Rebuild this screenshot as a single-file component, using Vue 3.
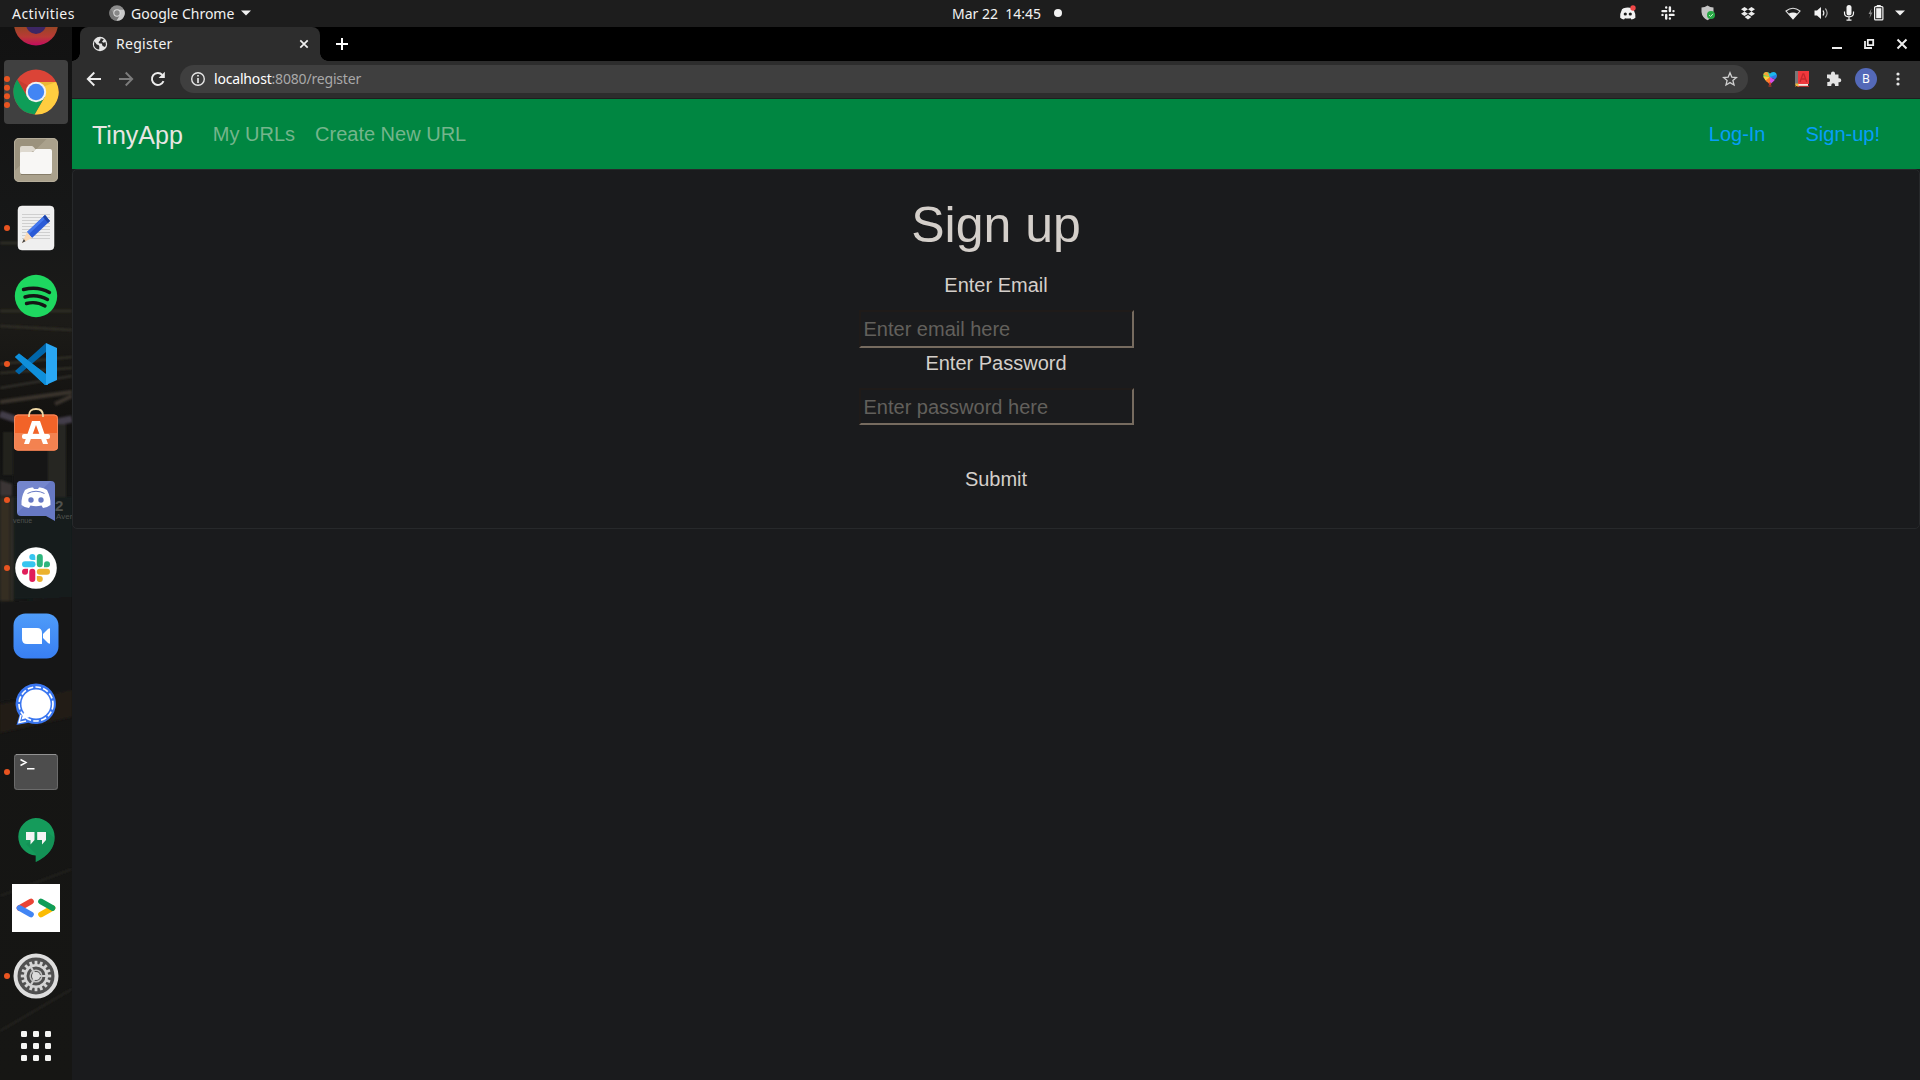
<script setup>
const gearTeeth = Array.from({ length: 16 }, (_, i) => i * 22.5)
const gridDots = [0, 12, 24].flatMap((y) => [0, 12, 24].map((x) => ({ x, y })))
const signalDashes = '5.6 2.3'
</script>

<template>
  <div class="desktop">
    <header class="topbar">
      <div class="topbar-left">
        <span class="activities">Activities</span>
        <svg class="mini-chrome" width="16" height="16" viewBox="0 0 48 48">
          <circle cx="24" cy="24" r="23" fill="#8d8d8d" />
          <path d="M24 14H45A23 23 0 0 1 22 47L33 29Z" fill="#c9c9c9" />
          <path d="M22 47A23 23 0 0 1 5 11L15 29L33 29Z" fill="#777" />
          <circle cx="24" cy="24" r="11" fill="#ddd" />
          <circle cx="24" cy="24" r="8" fill="#888" />
        </svg>
        <span class="app-name">Google Chrome</span>
        <svg width="10" height="6" viewBox="0 0 10 6"><path d="M0 .5H10L5 5.5Z" fill="#f2f2f2" /></svg>
      </div>
      <div class="clock"><span>Mar 22&nbsp; 14:45</span><i class="dot"></i></div>
      <div class="tray">
        <span class="slot wide">
          <svg width="18" height="16" viewBox="0 0 18 16">
            <path d="M4.5 3.2Q9 1.8 13 3.2L14.5 4.4Q17 9 16.4 12.8Q14.5 14.4 12.4 14.6L11.6 13.2Q8.8 14 6 13.2L5 14.6Q3 14.3 1.2 12.8Q.8 8.5 3 4.2Z" fill="#f2f2f2" />
            <circle cx="6.3" cy="9" r="1.6" fill="#1d1d1d" /><circle cx="11.3" cy="9" r="1.6" fill="#1d1d1d" />
            <circle cx="14" cy="3" r="2.7" fill="#f04747" />
          </svg>
        </span>
        <span class="slot wide">
          <svg width="14" height="14" viewBox="0 0 14 14" stroke="#f2f2f2" stroke-width="2.4" stroke-linecap="round">
            <path d="M5.2 1.5V1.6M1.5 5.1H5.2M8.9 1.5V5.1M12.5 5.1V5.1M12.5 8.9H8.9M8.9 12.5V12.4M5.2 12.5V8.9M1.5 8.9V8.9" />
          </svg>
        </span>
        <span class="slot wide">
          <svg width="16" height="16" viewBox="0 0 16 16">
            <path d="M7.5 .5Q10 2.5 13.5 2.5V7Q13 12.5 7.5 15.3Q2 12.5 1.5 7V2.5Q5 2.5 7.5 .5Z" fill="#c4c4c4" />
            <circle cx="11" cy="10" r="4" fill="#27a844" />
            <path d="M9 10L10.6 11.5L13 8.8" fill="none" stroke="#c8efcf" stroke-width="1" />
          </svg>
        </span>
        <span class="slot wide">
          <svg width="14" height="13" viewBox="0 0 14 13" fill="#ececec">
            <path d="M3.5 0L7 2.2L3.5 4.4L0 2.2ZM10.5 0L14 2.2L10.5 4.4L7 2.2ZM3.5 4.5L7 6.7L3.5 8.9L0 6.7ZM10.5 4.5L14 6.7L10.5 8.9L7 6.7ZM7 8L10.4 10.1L7 12.4L3.6 10.1Z" />
          </svg>
        </span>
        <span class="slot wifi">
          <svg width="16" height="13" viewBox="0 0 16 13">
            <path d="M1 4Q8-1.5 15 4L8 12Z" fill="none" stroke="#dedede" stroke-width="1.1" />
            <path d="M3.5 6.8Q8 4 12.5 6.8L8 12.3Z" fill="#f2f2f2" />
          </svg>
        </span>
        <span class="slot">
          <svg width="15" height="14" viewBox="0 0 15 14" fill="none" stroke="#f2f2f2" stroke-width="1.2">
            <path d="M.5 4.5H3L7 1V13L3 9.5H.5Z" fill="#f2f2f2" stroke="none" />
            <path d="M9 4.5Q10.7 7 9 9.5" /><path d="M11.3 2.5Q15 7 11.3 11.5" stroke="#a8a8a8" />
          </svg>
        </span>
        <span class="slot mic">
          <svg width="12" height="16" viewBox="0 0 12 16">
            <rect x="3.5" y="0" width="5" height="10.5" rx="2.5" fill="#f2f2f2" />
            <path d="M1.5 6.5V8Q1.5 11.8 6 11.8T10.5 8V6.5M6 12V15M3.5 15.2H8.5" fill="none" stroke="#f2f2f2" stroke-width="1.2" />
          </svg>
        </span>
        <span class="slot">
          <svg width="16" height="16" viewBox="0 0 16 16">
            <path d="M3.5 3.5L.5 9H2.3L1.5 13L4.5 7.5H2.7Z" fill="#8a8a8a" />
            <path d="M9 1V.5H12.5V1" fill="none" stroke="#f2f2f2" />
            <rect x="6.6" y="1.6" width="8.3" height="13.3" rx="1" fill="none" stroke="#f2f2f2" stroke-width="1.2" />
            <rect x="8.2" y="3.2" width="5.1" height="10" fill="#f2f2f2" />
          </svg>
        </span>
        <span class="slot arrow">
          <svg width="10" height="6" viewBox="0 0 10 6"><path d="M0 .5H10L5 5.5Z" fill="#f2f2f2" /></svg>
        </span>
      </div>
    </header>

    <div class="workspace">
      <aside class="dock">
        <div class="wallpaper" aria-hidden="true">
          <svg width="72" height="1053" viewBox="0 27 72 1053">
            <defs>
              <linearGradient id="wall" x1="0" y1="0" x2="0" y2="1">
                <stop offset="0" stop-color="#121212" /><stop offset=".2" stop-color="#171818" />
                <stop offset=".28" stop-color="#1c1b18" /><stop offset=".38" stop-color="#12110f" />
                <stop offset=".5" stop-color="#181b1c" /><stop offset=".56" stop-color="#151514" />
                <stop offset="1" stop-color="#161614" />
              </linearGradient>
              <filter id="soft"><feGaussianBlur stdDeviation="1" /></filter>
            </defs>
            <rect y="27" width="72" height="1053" fill="url(#wall)" />
            <g filter="url(#soft)">
              <path d="M0 243H18M0 311H72M0 326L72 330M0 364L72 357M0 373L72 368M0 388L72 376" stroke="#34322b" stroke-width="2" fill="none" />
              <path d="M0 402L72 392M55 404L72 396" stroke="#3a352d" stroke-width="4" fill="none" />
              <path d="M0 414L18 420M56 422L72 419" stroke="#423c4a" stroke-width="7" fill="none" />
              <path d="M3 432H13V475H3Z" fill="#22201e" /><path d="M13 437H50V485H13Z" fill="#171819" />
              <path d="M48 424H66V500H48Z" fill="#262624" />
              <path d="M0 480L12 484V496H0Z" fill="#3a3635" />
              <path d="M0 497H10V601H0Z" fill="#342e22" /><path d="M12 497V601" stroke="#403d30" stroke-width="1.5" />
              <path d="M14 497H72V599H14Z" fill="#171b1d" />
              <path d="M0 602L72 597V690L0 702Z" fill="#151412" />
              <path d="M0 704L72 690V717L0 733Z" fill="#201e19" />
              <path d="M0 896L72 869M0 1031L72 989" stroke="#2d2c28" stroke-width="1.2" />
            </g>
          </svg>
          <span class="sign num">2</span><span class="sign av-right">Aver</span><span class="sign av-left">venue</span>
        </div>

        <ul class="launcher">
          <li>
            <svg viewBox="0 0 48 48">
              <defs><linearGradient id="fx" x1="0" y1="0" x2="0" y2="1"><stop offset=".5" stop-color="#8d4a20" /><stop offset=".8" stop-color="#b93a35" /><stop offset="1" stop-color="#c30b60" /></linearGradient></defs>
              <circle cx="24" cy="23.5" r="22" fill="url(#fx)" /><circle cx="24" cy="24" r="10" fill="#3d2663" />
            </svg>
          </li>
          <li class="active">
            <i class="run"></i>
            <svg viewBox="0 0 48 48">
              <circle cx="24" cy="24" r="22.5" fill="#db4437" />
              <path d="M24 14H44.16A22.5 22.5 0 0 1 22.58 46.46L32.66 29Z" fill="#ffcd40" />
              <path d="M22.58 46.46A22.5 22.5 0 0 1 5.26 11.54L15.34 29L32.66 29Z" fill="#0f9d58" />
              <path d="M5.26 11.54L13.5 25L15 17Z" fill="#b53329" opacity=".5" />
              <path d="M24 14H44.16L33 18Z" fill="#d9a52b" opacity=".5" />
              <circle cx="24" cy="24" r="10.2" fill="#f1f1f1" /><circle cx="24" cy="24" r="8.2" fill="#4285f4" />
            </svg>
          </li>
          <li>
            <svg viewBox="0 0 48 48">
              <rect x="2" y="2" width="44" height="44" rx="5" fill="#aaa18c" />
              <path d="M2.5 35V7Q2.5 2.5 7 2.5H35Z" fill="#9b927d" />
              <rect x="2.5" y="2.5" width="43" height="43" rx="4.5" fill="none" stroke="#b5ad9a" />
              <path d="M8 21V12Q8 10 10 10H20Q21 10 22 11.5L24 14Z" fill="#ded9cf" />
              <path d="M8 17Q8 16 10 16H21L24 13H38Q40 13 40 15V36Q40 38 38 38H10Q8 38 8 36Z" fill="#f8f7f5" />
              <path d="M9 38.5H39" stroke="#867d69" />
            </svg>
          </li>
          <li>
            <i class="run"></i>
            <svg viewBox="0 0 48 48">
              <rect x="6" y="2" width="36" height="44" rx="4" fill="#efefef" stroke="#fff" stroke-width=".5" />
              <path d="M10 10.5H38M10 13.5H38M10 16.5H38M10 19.5H38M10 22.5H38M10 25.5H38M10 28.5H38M10 31.5H38M10 34.5H38" stroke="#cfcfcf" />
              <path d="M15 28L33 11L38 17L20 34Z" fill="#2b5bd7" /><path d="M15 28L33 11L34.8 13L17 30Z" fill="#4478ee" />
              <path d="M31 13L33 11L38 17L36 19Z" fill="#1d43a5" />
              <path d="M15 28L20 34L10 39Z" fill="#fad9b5" /><path d="M11.8 35L13.5 37.2L10 39Z" fill="#444" />
            </svg>
          </li>
          <li>
            <svg viewBox="0 0 48 48">
              <circle cx="24" cy="24" r="21.2" fill="#1ed760" />
              <path d="M11.5 17.5Q26 13.8 37.5 20.5M13 25Q25 21.5 35.5 27.5M14.5 31.5Q24.5 29 33 34" fill="none" stroke="#151515" stroke-width="3.4" stroke-linecap="round" />
            </svg>
          </li>
          <li>
            <i class="run"></i>
            <svg viewBox="0 0 48 48">
              <path d="M3 31L7 34.5L34 12V3Z" fill="#0065a9" />
              <path d="M3 17L7 13.5L36 36V45H33Z" fill="#0088d1" />
              <path d="M34 3L45 8V40L34 45Z" fill="#29a7f4" />
              <path d="M3 17L7 13.5L34 34V45H33Z" fill="#0f8fdb" />
            </svg>
          </li>
          <li>
            <svg viewBox="0 0 48 48">
              <rect x="2" y="6.5" width="44" height="36" rx="4" fill="#f26328" />
              <path d="M2 25H46V38.5Q46 42.5 42 42.5H6Q2 42.5 2 38.5Z" fill="#f38250" />
              <rect x="2.5" y="7" width="43" height="35" rx="3.5" fill="none" stroke="#f5895e" />
              <path d="M17 9V7.500Q17 1 24 1T31 7.500V9" fill="none" stroke="#f0d8a5" stroke-width="1.8" />
              <path d="M20 13H28L36 36H31L24 17L17 36H12Z" fill="#fff" />
              <rect x="10" y="26" width="28" height="5" rx="2" fill="#fff" />
            </svg>
          </li>
          <li>
            <i class="run"></i>
            <svg viewBox="0 0 48 48">
              <path d="M9 5H39Q43 5 43 9V45L34 40H9Q5 40 5 36V9Q5 5 9 5Z" fill="#6779c4" />
              <path d="M5 9Q5 5 9 5H39L5 37Z" fill="#7486cd" />
              <path d="M13 14Q17 11 21 11.5L22 13H26L27 11.5Q31 11 35 14Q39 22 38.5 29Q34.5 32 31 32L29.5 29.5Q24 31 18.5 29.5L17 32Q13 32 9.5 29Q9 21 13 14Z" fill="#fff" />
              <path d="M15.500 17.500Q24 13 32.500 17.500" fill="none" stroke="#6779c4" stroke-width="1" />
              <circle cx="19" cy="24" r="2.7" fill="#6779c4" /><circle cx="29" cy="24" r="2.7" fill="#6779c4" />
            </svg>
          </li>
          <li>
            <i class="run"></i>
            <svg viewBox="0 0 48 48">
              <circle cx="24" cy="24" r="20.8" fill="#fff" />
              <g stroke-width="6" stroke-linecap="round">
                <path d="M13 20.3H20.5" stroke="#36c5f0" /><path d="M27.8 13V20.3" stroke="#2eb67d" />
                <path d="M27.8 27.8H35" stroke="#ecb22e" /><path d="M20.3 27.8V35" stroke="#e01e5a" />
              </g>
              <path d="M23.3 16V13A3 3 0 1 0 20.3 16Z" fill="#36c5f0" /><path d="M32 23.3H35A3 3 0 1 0 32 20.3Z" fill="#2eb67d" />
              <path d="M24.8 32V35A3 3 0 1 0 27.8 32Z" fill="#ecb22e" /><path d="M16 24.8H13A3 3 0 1 0 16 27.8Z" fill="#e01e5a" />
            </svg>
          </li>
          <li>
            <svg viewBox="0 0 48 48">
              <defs><linearGradient id="zm" x1="0" y1="0" x2="0" y2="1"><stop offset="0" stop-color="#4f9cf9" /><stop offset="1" stop-color="#397ff2" /></linearGradient></defs>
              <rect x="1.5" y="1.5" width="45" height="45" rx="12" fill="url(#zm)" />
              <path d="M10 16H25Q30 16 30 21V32H15Q10 32 10 27Z" fill="#fff" /><path d="M31 22L36 17Q38 15.5 38 17V31Q38 32.5 36 31L31 26Z" fill="#fff" />
            </svg>
          </li>
          <li>
            <svg viewBox="0 0 48 48">
              <path d="M24 3.5A20.3 20.3 0 1 1 16.5 42.8L4.5 45L7.3 35.5A20.3 20.3 0 0 1 24 3.5Z" fill="#3a76f0" />
              <circle cx="24" cy="24" r="17" fill="none" stroke="#fff" stroke-width="1.7" :stroke-dasharray="signalDashes" />
              <path d="M9 35L7 42.5L14 41" fill="none" stroke="#fff" stroke-width="1.5" />
              <circle cx="24" cy="24" r="14.6" fill="#fff" /><path d="M12 32L9.5 39.5L18 37Z" fill="#fff" />
            </svg>
          </li>
          <li>
            <i class="run"></i>
            <svg viewBox="0 0 48 48">
              <rect x="2" y="6" width="44" height="36" rx="3" fill="#4d4d4d" />
              <rect x="2.5" y="6.5" width="43" height="35" rx="3" fill="none" stroke="#6b6b6b" />
              <path d="M4 6.5H44" stroke="#929292" />
              <path d="M8.5 11.5L14 14.5L8.5 17.5M15 20.7H22.5" fill="none" stroke="#fff" stroke-width="1.5" />
            </svg>
          </li>
          <li>
            <svg viewBox="0 0 48 48">
              <path d="M24 2A19 19 0 0 1 43 21Q43 37 24 46V39.5A18.8 18.8 0 0 1 24 2Z" fill="#159b5b" transform="translate(-.3 0)" />
              <path d="M14 28L24 38V46Q42 37 42.500 22L34 15Z" fill="#128550" opacity=".4" />
              <path d="M14 16H22.5V24L18.5 28.5V24H14ZM25.2 16H34V24L30 28.5V24H25.2Z" fill="#f4f4f4" />
            </svg>
          </li>
          <li>
            <svg viewBox="0 0 48 48">
              <rect width="48" height="48" fill="#fff" />
              <g stroke-width="5.7" stroke-linecap="round">
                <path d="M7.5 24L19 17.5" stroke="#ea4335" /><path d="M7.5 24L19 30.4" stroke="#4285f4" />
                <path d="M29 30.4L40.5 24" stroke="#fbbc04" /><path d="M29 17.5L40.5 24" stroke="#0f9d58" />
              </g>
            </svg>
          </li>
          <li>
            <i class="run"></i>
            <svg viewBox="0 0 48 48">
              <circle cx="24" cy="24" r="20.5" fill="#505050" stroke="#dedede" stroke-width="4" />
              <rect v-for="a in gearTeeth" :key="a" x="22.6" y="8.8" width="2.8" height="4" fill="#d5d5d5" :transform="`rotate(${a} 24 24)`" />
              <circle cx="24" cy="24" r="10.8" fill="none" stroke="#d5d5d5" stroke-width="2.6" />
              <path d="M24 24L18 13.5M24 24H36M24 24L18 34.5" stroke="#cfcfcf" stroke-width="2" />
              <circle cx="24" cy="24" r="5.8" fill="none" stroke="#c2c2c2" stroke-width="1.5" />
              <circle cx="24" cy="24" r="4" fill="#dcdcdc" />
            </svg>
          </li>
          <li class="apps">
            <svg viewBox="0 0 48 48"><rect v-for="(d, i) in gridDots" :key="i" :x="9 + d.x" :y="9 + d.y" width="6" height="6" rx="1.2" fill="#f4f4f2" /></svg>
          </li>
        </ul>
      </aside>

      <main class="browser">
        <div class="tabstrip">
          <div class="tab">
            <svg class="globe" width="16" height="16" viewBox="0 0 16 16">
              <circle cx="8" cy="8" r="7.2" fill="#e6e6e6" />
              <path d="M2.3 5.3L4.8 8.5Q7 8.7 7.3 10.3L7.2 13.6Q3.5 13.3 2 9.5ZM8.8 2.3L8 4.6L6.5 6.2L7.5 7.6H9.7L10.6 10L13 11Q14.5 8.5 13.5 6L11.5 6.8L10 5.8L11.8 3.2Z" fill="#2d2d2d" />
            </svg>
            <span class="tab-title">Register</span>
            <svg width="10" height="10" viewBox="0 0 10 10"><path d="M1.3 1.3L8.7 8.7M8.7 1.3L1.3 8.7" stroke="#f1f1f1" stroke-width="1.7" /></svg>
          </div>
          <svg class="plus" width="12" height="12" viewBox="0 0 12 12"><path d="M6 0V12M0 6H12" stroke="#fff" stroke-width="2" /></svg>
          <div class="win-buttons">
            <svg width="12" height="12" viewBox="0 0 12 12"><path d="M2 10H12" stroke="#ededed" stroke-width="2" /></svg>
            <svg width="12" height="12" viewBox="0 0 12 12"><path d="M4.8 1.8H10.2V7.2H4.8ZM2 3V10H9" fill="none" stroke="#ededed" stroke-width="1.8" /></svg>
            <svg width="12" height="12" viewBox="0 0 12 12"><path d="M1.5 1.5L10.5 10.5M10.5 1.5L1.5 10.5" stroke="#ededed" stroke-width="2" /></svg>
          </div>
        </div>

        <div class="toolbar">
          <span class="tool"><svg width="16" height="16" viewBox="0 0 16 16"><path d="M15 8H2M8.3 1.5L1.8 8L8.3 14.5" fill="none" stroke="#ededed" stroke-width="1.9" /></svg></span>
          <span class="tool"><svg width="16" height="16" viewBox="0 0 16 16"><path d="M1 8H14M7.7 1.5L14.2 8L7.7 14.5" fill="none" stroke="#7c7c7c" stroke-width="1.9" /></svg></span>
          <span class="tool"><svg width="16" height="16" viewBox="0 0 16 16"><path d="M13.5 10.2A6 6 0 1 1 12.3 3.8" fill="none" stroke="#ededed" stroke-width="1.9" /><path d="M14.8 .8V7H8.6Z" fill="#ededed" /></svg></span>
          <div class="omnibox">
            <svg width="16" height="16" viewBox="0 0 16 16"><circle cx="8" cy="8" r="6.3" fill="none" stroke="#e6e6e6" stroke-width="1.4" /><path d="M8 4V5.6M8 7V12" stroke="#e6e6e6" stroke-width="1.7" /></svg>
            <span class="url"><b>localhost</b>:8080/register</span>
            <svg class="star" width="16" height="16" viewBox="0 0 16 16"><path d="M8 1.8L9.8 6.1L14.4 6.5L10.9 9.5L12 14L8 11.6L4 14L5.1 9.5L1.6 6.5L6.2 6.1Z" fill="none" stroke="#cfcfcf" stroke-width="1.3" /></svg>
          </div>
          <span class="tool">
            <svg width="16" height="16" viewBox="0 0 16 16">
              <clipPath id="heart"><path d="M8 13.2Q1.5 8.5 1.3 4.7Q1.3 1 4.6 1Q7 1 8 3Q9 1 11.4 1Q14.7 1 14.7 4.7Q14.5 8.5 8 13.2Z" /></clipPath>
              <g clip-path="url(#heart)">
                <path d="M0 0H9V6L0 7Z" fill="#6fdc4c" /><path d="M0 0H5L8 6L0 3Z" fill="#f1a53a" /><path d="M6 0H16V7H8Z" fill="#1db6ed" /><path d="M8 6L16 3V10Z" fill="#3177e8" />
                <path d="M0 5L8 6L4 12Z" fill="#ffd13b" /><path d="M8 6L3 10L8 15Z" fill="#ff7a2f" /><path d="M8 6L15 10L8 15Z" fill="#d64ee2" />
              </g>
              <path d="M7 12L9 12L8 14ZM6.5 15H9.5" fill="#e63b2e" stroke="#d23a2a" stroke-width="1" />
            </svg>
          </span>
          <span class="tool">
            <svg width="16" height="16" viewBox="0 0 16 16">
              <rect x="1" y="0" width="14" height="13" fill="#ef383c" /><rect x="1" y="0" width="3" height="14" fill="#777" />
              <path d="M2 13H14V15H2Z" fill="#f1e9e2" /><path d="M3 15.3H15" stroke="#d12d2d" /><path d="M6 11L8.9 3H9.8L12.7 11M7 8H11.6" fill="none" stroke="#c5272c" stroke-width="1.3" />
              <path d="M1.5 12.5H4.5V16L3 14.5L1.5 16Z" fill="#f2b632" />
            </svg>
          </span>
          <span class="tool">
            <svg width="16" height="16" viewBox="0 0 16 16"><path d="M1 3.5H5V2.5A2 2 0 0 1 9 2.5V3.5H12.5V7.3H13.3A2 2 0 0 1 13.3 11.3H12.5V15H9V14A1.8 1.8 0 0 0 5.3 14V15H1.3V11H2.2A1.8 1.8 0 0 0 2.2 7.3H1Z" fill="#e4e4e4" /></svg>
          </span>
          <span class="tool"><i class="avatar">B</i></span>
          <span class="tool"><svg width="4" height="14" viewBox="0 0 4 14" fill="#e6e6e6"><circle cx="2" cy="2" r="1.6" /><circle cx="2" cy="7" r="1.6" /><circle cx="2" cy="12" r="1.6" /></svg></span>
        </div>

        <div class="page">
          <nav class="navbar">
            <a class="brand">TinyApp</a>
            <a class="link">My URLs</a>
            <a class="link">Create New URL</a>
            <div class="account"><a>Log-In</a><a>Sign-up!</a></div>
          </nav>
          <form class="card" @submit.prevent>
            <h1>Sign up</h1>
            <label for="email">Enter Email</label>
            <input id="email" type="email" placeholder="Enter email here" />
            <label for="password">Enter Password</label>
            <input id="password" class="short" type="password" placeholder="Enter password here" />
            <button type="submit">Submit</button>
          </form>
        </div>
      </main>
    </div>
  </div>
</template>

<style>
html,
body {
  margin: 0;
  overflow: hidden;
  background: #1a1b1d;
}
</style>

<style scoped>
.desktop {
  width: 1920px;
  height: 1080px;
  display: flex;
  flex-direction: column;
  overflow: hidden;
  font-family: "Noto Sans", "Open Sans", sans-serif;
  color: #f2f2f2;
}
svg {
  display: block;
  flex: none;
}
.topbar {
  height: 27px;
  flex: none;
  box-sizing: border-box;
  padding-bottom: 1px;
  display: flex;
  align-items: center;
  background: #1d1d1d;
  font-size: 14px;
  line-height: 25px;
  white-space: nowrap;
}
.topbar-left {
  width: 940px;
  padding-left: 12px;
  display: flex;
  align-items: center;
}
.activities {
  width: 97px;
  letter-spacing: 0.45px;
}
.app-name {
  width: 104px;
  margin: 0 6px;
}
.clock {
  display: flex;
  align-items: center;
}
.clock span {
  width: 102px;
}
.dot {
  width: 8px;
  height: 8px;
  border-radius: 50%;
  background: #f2f2f2;
}
.tray {
  margin-left: auto;
  padding-right: 10px;
  display: flex;
  align-items: center;
}
.slot {
  width: 28px;
  display: flex;
  justify-content: center;
}
.slot.wide {
  width: 40px;
}
.slot.wifi {
  margin-left: 11px;
}
.slot.mic {
  width: 27px;
}
.slot.arrow {
  width: 20px;
}
.workspace {
  flex: 1;
  min-height: 0;
  display: flex;
}
.dock {
  position: relative;
  width: 72px;
  flex: none;
  overflow: hidden;
  background: #151515;
}
.wallpaper {
  position: absolute;
  inset: 0;
}
.sign {
  position: absolute;
  color: #50524f;
  font: 8px/8px "Liberation Sans", sans-serif;
}
.sign.num {
  left: 55px;
  top: 471px;
  font-size: 15px;
  line-height: 15px;
  font-weight: 700;
}
.sign.av-right {
  left: 56px;
  top: 486px;
}
.sign.av-left {
  left: 13px;
  top: 490px;
  font-size: 7px;
}
.launcher {
  position: relative;
  list-style: none;
  margin: -37px 0 0;
  padding: 0;
}
.launcher li {
  position: relative;
  height: 68px;
  display: flex;
  align-items: center;
  justify-content: center;
}
.launcher li.active::before {
  content: "";
  position: absolute;
  inset: 2px 4px;
  border-radius: 4px;
  background: #404040;
}
.launcher li.apps {
  height: 72px;
}
.launcher svg {
  position: relative;
  width: 48px;
  height: 48px;
}
.run {
  position: absolute;
  z-index: 1;
  left: 4px;
  top: 31px;
  width: 6px;
  height: 6px;
  border-radius: 50%;
  background: #e95420;
}
.active .run {
  top: 18px;
  box-shadow: 0 8.7px #e95420, 0 17.3px #e95420, 0 26px #e95420;
}
.browser {
  flex: 1;
  min-width: 0;
  display: flex;
  flex-direction: column;
}
.tabstrip {
  height: 34px;
  flex: none;
  display: flex;
  align-items: center;
  padding-left: 8px;
  background: #000;
}
.tab {
  position: relative;
  box-sizing: border-box;
  width: 240px;
  height: 34px;
  display: flex;
  align-items: center;
  padding: 0 11px 0 12px;
  border-radius: 8px 8px 0 0;
  background: #2d2d2d;
  font-size: 14px;
}
.tab::before,
.tab::after {
  content: "";
  position: absolute;
  bottom: 0;
  width: 8px;
  height: 8px;
}
.tab::before {
  left: -8px;
  background: radial-gradient(circle at 0 0, #000 7.5px, #2d2d2d 8px);
}
.tab::after {
  right: -8px;
  background: radial-gradient(circle at 100% 0, #000 7.5px, #2d2d2d 8px);
}
.tab-title {
  flex: 1;
  margin-left: 8px;
  padding-bottom: 2px;
  letter-spacing: 0.3px;
}
.plus {
  margin-left: 16px;
}
.win-buttons {
  margin-left: auto;
  padding-right: 12px;
  display: flex;
  gap: 21px;
}
.toolbar {
  height: 38px;
  flex: none;
  box-sizing: border-box;
  display: flex;
  align-items: center;
  padding: 0 6px 1px;
  background: #2d2d2d;
  border-bottom: 1px solid #1f1f1f;
}
.tool {
  width: 32px;
  display: flex;
  justify-content: center;
}
.omnibox {
  flex: 1;
  height: 28px;
  margin: 0 6px;
  box-sizing: border-box;
  padding: 0 10px;
  display: flex;
  align-items: center;
  border-radius: 14px;
  background: #3f3f3f;
  font-size: 14px;
}
.url {
  margin-left: 8px;
  padding-bottom: 2px;
  letter-spacing: -0.18px;
  color: #a9a9a9;
}
.url b {
  font-weight: 400;
  color: #fff;
}
.star {
  margin-left: auto;
}
.avatar {
  width: 22px;
  height: 22px;
  border-radius: 50%;
  background: #5469b8;
  color: #fff;
  font-size: 12px;
  line-height: 22px;
  font-style: normal;
  text-align: center;
}
.page {
  flex: 1;
  background: #1a1b1d;
  color: #d4cfca;
  font: 20px/30px "Liberation Sans", Arial, sans-serif;
}
.navbar {
  height: 70px;
  box-sizing: border-box;
  padding: 0 20px;
  display: flex;
  align-items: center;
  background: #008641;
}
.brand {
  margin-right: 20px;
  padding-top: 1px;
  font-size: 25px;
  line-height: 38px;
  color: #e8e6e3;
}
.link {
  padding: 0 10px;
  color: #74b58c;
}
.account {
  margin-left: auto;
  display: flex;
}
.account a {
  padding: 0 20px;
  color: #079ef8;
}
.card {
  height: 360px;
  box-sizing: border-box;
  padding-top: 25px;
  display: flex;
  flex-direction: column;
  align-items: center;
  border: 1px solid #27292b;
  border-radius: 5px;
}
h1 {
  margin: 0 0 15px;
  font-size: 50px;
  font-weight: 400;
  line-height: 60px;
}
label {
  margin-bottom: 10px;
}
input {
  box-sizing: border-box;
  width: 275px;
  height: 38px;
  padding: 1px 3px;
  border: 2px solid;
  border-color: #1f1b19 #766b5f #766b5f #1f1b19;
  background: transparent;
  color: inherit;
  font: inherit;
  outline: none;
}
input.short {
  height: 37px;
  padding: 2px 3px 0;
}
input::placeholder {
  color: #62605c;
  opacity: 1;
}
button {
  margin-top: 39px;
  padding: 0;
  border: 0;
  background: none;
  color: inherit;
  font: inherit;
}
</style>
